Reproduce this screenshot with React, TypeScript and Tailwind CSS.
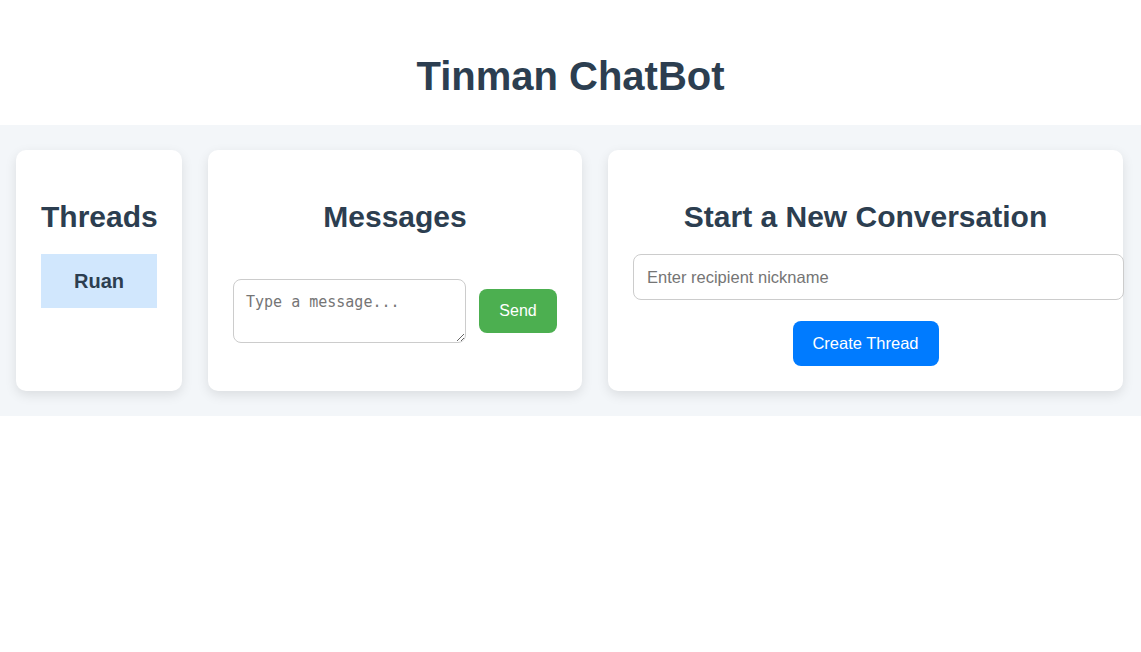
import { useState } from "react";

const cardClass =
  "rounded-[10px] bg-white p-[25px] text-center shadow-[0_4px_12px_rgba(0,0,0,0.1)]";

const headingClass =
  "mt-[25px] mb-[20px] text-[30px] font-bold leading-[34px] text-[#2c3e50]";

export default function App() {
  const [threads] = useState(["Ruan"]);
  const [message, setMessage] = useState("");
  const [nickname, setNickname] = useState("");

  return (
    <div className="min-h-[652px] bg-white font-['Liberation_Sans',Arial,sans-serif] text-[#2c3e50]">
      <header className="pt-[53px] pb-[26px] text-center">
        <h1 className="text-[40px] font-bold leading-[46px] text-[#2c3e50]">
          Tinman ChatBot
        </h1>
      </header>

      <main className="flex items-stretch gap-[26px] bg-[#f3f6f9] py-[25px] pl-[16px] pr-[18px]">
        {/* thread list */}
        <section className={`${cardClass} w-[166px] shrink-0`}>
          <h2 className={headingClass}>Threads</h2>
          <ul className="flex flex-col">
            {threads.map((t) => (
              <li
                key={t}
                className="flex h-[54px] cursor-pointer items-center justify-center bg-[#d1e7fd] text-[20px] font-bold text-[#2c3e50]"
              >
                {t}
              </li>
            ))}
          </ul>
        </section>

        {/* messages */}
        <section className={`${cardClass} w-[374px] shrink-0`}>
          <h2 className={headingClass}>Messages</h2>
          <div className="mt-[45px] flex items-center gap-[13px]">
            <textarea
              value={message}
              onChange={(e) => setMessage(e.target.value)}
              placeholder="Type a message..."
              className="h-[64px] w-[233px] rounded-[8px] border border-[#cccccc] px-[12px] pt-[13px] pb-[10px] font-['DejaVu_Sans_Mono',monospace] text-[15px] leading-[18px] text-[#333] placeholder:text-[#757575] outline-none"
            />
            <button
              type="button"
              className="h-[44px] w-[78px] rounded-[8px] bg-[#4caf50] text-[16px] text-white"
            >
              Send
            </button>
          </div>
        </section>

        {/* new conversation */}
        <section className={`${cardClass} w-[515px] shrink-0`}>
          <h2 className={headingClass}>Start a New Conversation</h2>
          <input
            value={nickname}
            onChange={(e) => setNickname(e.target.value)}
            placeholder="Enter recipient nickname"
            className="block h-[46px] w-[491px] rounded-[8px] border border-[#cccccc] pl-[13px] pr-[12px] text-[16.5px] text-[#333] placeholder:text-[#757575] outline-none"
          />
          <button
            type="button"
            className="mt-[21px] h-[45px] w-[146px] rounded-[8px] bg-[#007bff] text-[16.5px] text-white"
          >
            Create Thread
          </button>
        </section>
      </main>
    </div>
  );
}
